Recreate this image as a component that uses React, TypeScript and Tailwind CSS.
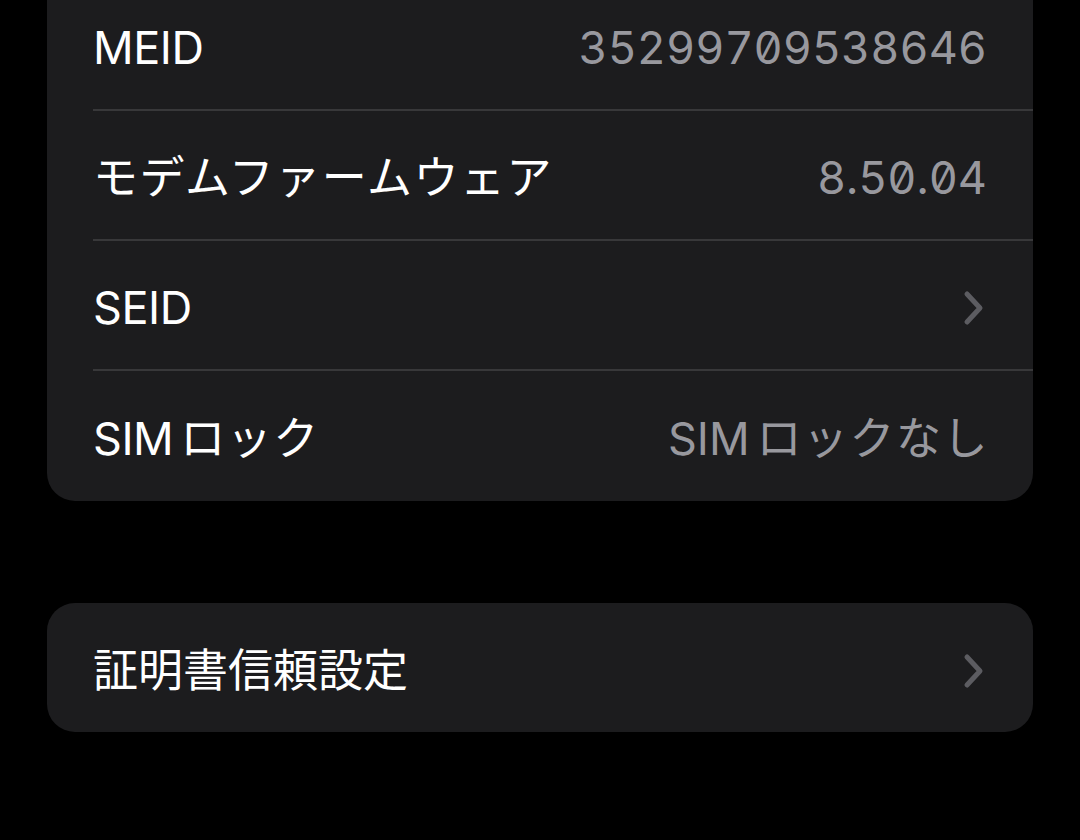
import React from "react";

type Row = { label: string; value?: string; chevron?: boolean; mono?: boolean };

const rows: Row[] = [
  { label: "MEID", value: "35299709538646", mono: true },
  { label: "モデムファームウェア", value: "8.50.04", mono: true },
  { label: "SEID", chevron: true },
  { label: "SIMロック", value: "SIMロックなし" },
];

const font = { fontFamily: "Inter, 'Noto Sans CJK JP', sans-serif" };

// kana runs get a little extra spacing, like the iOS system font
function Txt({ text }: { text: string }) {
  const parts = text.split(/([\u3040-\u30ff]+)/).filter(Boolean);
  return (
    <>
      {parts.map((p, i) =>
        /[\u3040-\u30ff]/.test(p) ? (
          <span key={i} className={`tracking-[0.033em] ${i > 0 ? "ml-[7px]" : ""}`}>
            {p}
          </span>
        ) : (
          <span key={i}>{p}</span>
        )
      )}
    </>
  );
}

function Chevron() {
  return (
    <svg width="24" height="36" viewBox="0 0 24 36" fill="none" className="shrink-0">
      <path
        d="M5 4 L18 18 L5 32"
        stroke="#5c5c61"
        strokeWidth="5"
        strokeLinecap="round"
        strokeLinejoin="round"
      />
    </svg>
  );
}

function ListRow({ row, last, first }: { row: Row; last: boolean; first?: boolean }) {
  return (
    <div className={`pl-[46px] ${first ? "-mt-[19px]" : ""}`}>
      <div
        className={`h-[130px] pt-[6px] flex items-center justify-between pr-[46px] ${
          last ? "" : "border-b-2 border-[#38383a]"
        }`}
      >
        <span className="text-[45px] text-white tracking-[-0.01em]">
          <Txt text={row.label} />
        </span>
        {row.value && (
          <span
            className={`text-[45px] text-[#98989e] ${
              row.mono ? "slashed-zero tabular-nums" : "-mr-[2px]"
            }`}
          >
            <Txt text={row.value} />
          </span>
        )}
        {row.chevron && (
          <span className="mr-[1px]">
            <Chevron />
          </span>
        )}
      </div>
    </div>
  );
}

export default function App() {
  return (
    <div className="w-[1080px] h-[840px] bg-black overflow-hidden" style={font}>
      <div className="mx-[47px] bg-[#1c1c1e] rounded-b-[28px] overflow-hidden">
        {rows.map((r, i) => (
          <ListRow key={r.label} row={r} first={i === 0} last={i === rows.length - 1} />
        ))}
      </div>

      <div className="mx-[47px] mt-[102px] bg-[#1c1c1e] rounded-[28px]">
        <div className="h-[129px] pt-[6px] flex items-center justify-between pl-[46px] pr-[46px]">
          <span className="text-[45px] text-white">証明書信頼設定</span>
          <span className="mr-[1px]">
            <Chevron />
          </span>
        </div>
      </div>
    </div>
  );
}
